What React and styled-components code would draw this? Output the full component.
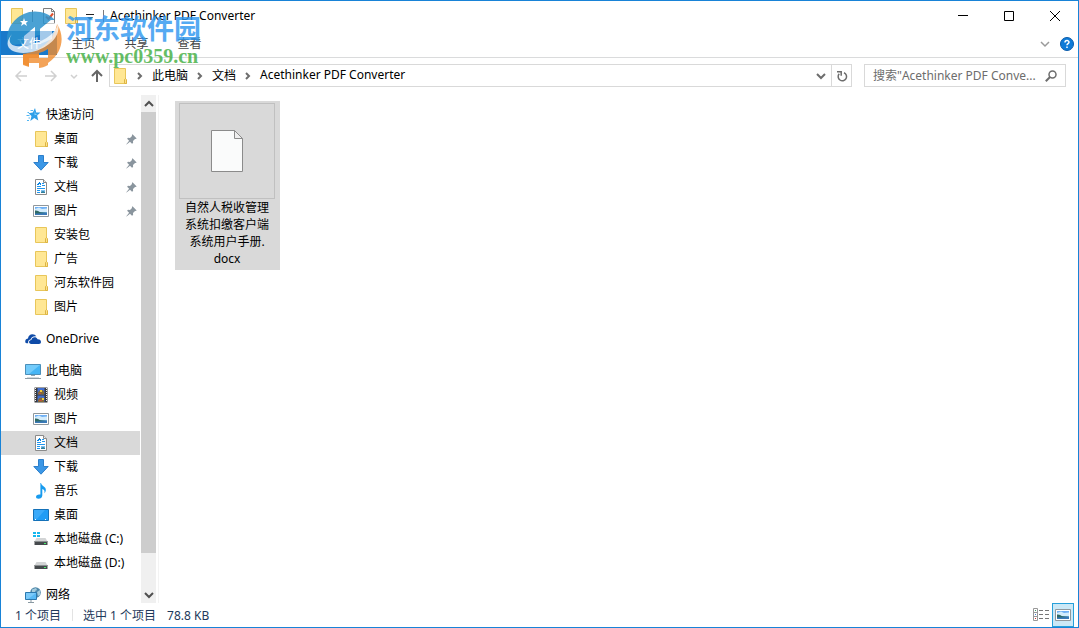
import { useState } from 'react'
import styled, { createGlobalStyle, css } from 'styled-components'

const GlobalStyle = createGlobalStyle`
  * {
    box-sizing: border-box;
  }

  body {
    margin: 0;
    background: #ffffff;
  }

  body, button, input {
    font-family: 'Noto Sans', 'Noto Sans CJK SC', sans-serif;
    font-size: 12px;
    color: #000000;
  }

  button {
    padding: 0;
    border: none;
    background: none;
  }

  svg {
    display: block;
    flex-shrink: 0;
  }
`

const Window = styled.div`
  position: relative;
  display: flex;
  flex-direction: column;
  height: 100vh;
  border: 1px solid #1883d7;
  background: #ffffff;
  overflow: hidden;
`

const TitleBar = styled.header`
  display: flex;
  align-items: center;
  height: 30px;
  padding-left: 8px;
`

const Separator = styled.span`
  width: 1px;
  height: 12px;
  background: ${props => props.$light ? '#e3e3e3' : '#7a7a7a'};
`

const QuickTools = styled.div`
  display: flex;
  align-items: center;
  gap: 4px;

  ${Separator} {
    margin: 0 3px;
  }
`

const ToolButton = styled.button`
  display: flex;
  align-items: center;
  justify-content: center;
  width: ${props => props.$narrow ? '12px' : '18px'};
  height: 20px;
`

const Title = styled.h1`
  flex: 1;
  margin: 0 0 0 3px;
  font-size: 12px;
  font-weight: 400;
  line-height: 16px;
`

const WindowButton = styled.button`
  display: flex;
  align-items: center;
  justify-content: center;
  width: 46px;
  height: 30px;

  &:hover {
    background: #e5e5e5;
  }
`

const Ribbon = styled.nav`
  display: flex;
  align-items: flex-start;
  height: 27px;
  border-bottom: 1px solid #dadbdc;
`

const Tab = styled.button`
  width: ${props => props.$file ? '56px' : '53px'};
  height: 24px;
  background: ${props => props.$file ? '#1979ca' : 'transparent'};
  color: ${props => props.$file ? '#ffffff' : '#444444'};
`

const RibbonEnd = styled.div`
  display: flex;
  align-items: center;
  gap: 7px;
  height: 26px;
  margin-left: auto;
  padding-right: 2px;
`

const AddressRow = styled.div`
  display: flex;
  align-items: center;
  padding: 6px 12px 8px;
`

const NavButtons = styled.div`
  display: flex;
  align-items: center;
  width: 96px;
  gap: 14px;
`

const NavButton = styled.button`
  display: flex;
  align-items: center;
  justify-content: center;
  width: ${props => props.$narrow ? '10px' : '16px'};
  height: 20px;
  margin: ${props => props.$narrow ? '0 -4px' : '0'};
`

const PathBox = styled.div`
  display: flex;
  align-items: center;
  flex: 1;
  height: 23px;
  border: 1px solid #d9d9d9;
`

const Crumbs = styled.div`
  display: flex;
  align-items: center;
  flex: 1;
  gap: 7px;
  padding-left: 2px;
`

const Crumb = styled.button`
  height: 20px;
  padding-bottom: 2px;
`

const PathButton = styled.button`
  display: flex;
  align-items: center;
  justify-content: center;
  width: 20px;
  height: 21px;
  border-left: ${props => props.$divided ? '1px solid #d9d9d9' : 'none'};
`

const SearchBox = styled.label`
  display: flex;
  align-items: center;
  width: 202px;
  height: 23px;
  margin-left: 12px;
  padding: 0 8px;
  border: 1px solid #d9d9d9;

  input {
    flex: 1;
    min-width: 0;
    height: 20px;
    padding: 0;
    border: none;
    outline: none;
    background: transparent;
    text-overflow: ellipsis;
  }

  input::placeholder {
    color: #6d6d6d;
    opacity: 1;
  }
`

const Body = styled.main`
  display: flex;
  flex: 1;
  min-height: 0;
`

const Sidebar = styled.aside`
  display: flex;
  width: 158px;
  padding-right: 2px;
  border-right: 1px solid #f3f3f3;
`

const Tree = styled.div`
  display: flex;
  flex: 1;
  flex-direction: column;
  gap: 8px;
  padding: 8px 0 0;
  overflow: hidden;
`

const Group = styled.div`
  flex-shrink: 0;
`

const TreeItem = styled.button`
  display: flex;
  align-items: center;
  gap: 5px;
  width: 100%;
  height: 24px;
  padding: 0 3px 0 ${props => props.$nested ? '32px' : '24px'};
  background: ${props => props.$selected ? '#d9d9d9' : 'transparent'};
  text-align: left;
  white-space: nowrap;

  span {
    flex: 1;
    padding-bottom: 2px;
  }
`

const ScrollTrack = styled.div`
  display: flex;
  flex-direction: column;
  width: 15px;
  margin-left: 1px;
  background: #f0f0f0;
`

const ScrollButton = styled.button`
  display: flex;
  align-items: center;
  justify-content: center;
  height: 17px;
`

const ScrollSpace = styled.div`
  flex: 1;
`

const ScrollThumb = styled.div`
  height: 93%;
  background: #cdcdcd;
`

const Files = styled.section`
  flex: 1;
  padding: 6px 16px;
`

const FileTile = styled.button`
  display: flex;
  flex-direction: column;
  align-items: center;
  width: 105px;
  padding: 2px 5px 3px 4px;
  background: ${props => props.$selected ? '#d9d9d9' : 'transparent'};
  line-height: 17px;
`

const Thumb = styled.span`
  display: flex;
  align-items: center;
  justify-content: center;
  width: 96px;
  height: 96px;
  border: 1px solid #c0c0c0;
`

const FileName = styled.span`
  width: 86px;
`

const StatusBar = styled.footer`
  display: flex;
  align-items: center;
  height: 24px;
  padding: 0 4px 0 14px;
  color: #1e395b;
`

const StatusText = styled.span`
  padding-right: 11px;
  white-space: nowrap;
`

const StatusDivider = styled(Separator)`
  margin-right: 10px;
`

const ViewButtons = styled.div`
  display: flex;
  align-items: center;
  margin-left: auto;
`

const ViewButton = styled.button`
  display: flex;
  align-items: center;
  justify-content: center;
  width: 22px;
  height: 24px;

  ${props => props.$active && css`
    border: 1px solid #26a0da;
    background: #cbe8f6;
  `}
`

const Watermark = styled.div`
  position: absolute;
  top: 8px;
  left: 4px;
  display: flex;
  align-items: center;
  gap: 3px;
  pointer-events: none;
`

const WatermarkText = styled.div`
  padding-top: 2px;
  opacity: 0.8;

  strong {
    display: block;
    color: #2b96f0;
    font-size: 27px;
    line-height: 32px;
  }

  em {
    display: block;
    color: #3fae3f;
    font-family: 'Liberation Serif', serif;
    font-size: 20px;
    font-style: normal;
    font-weight: 700;
    line-height: 22px;
  }
`

const Svg = ({ size = 16, w = size, h = size, children }) => (
  <svg width={w} height={h} viewBox={`0 0 ${w} ${h}`} fill="none" aria-hidden="true">
    {children}
  </svg>
)

const FolderIcon = () => (
  <Svg>
    <path d="M2.500.5h11v11.200l1 .8v3h-12z" fill="#ffe794" stroke="#e8c65a" />
    <path d="M12.500 15.500v-4l1-1 1 1.200v3.800z" fill="#ffe18a" stroke="#dcb544" />
  </Svg>
)

const StarIcon = () => (
  <Svg>
    <path d="M10 1l1.200 4.400 4.300.1-3.400 2.900 1.200 5-4-2.400-4 3 1.200-5L3.500 6.200l4.300-.6z" fill="#2f9fe8" />
    <path d="M5.500 3.500H8M2.500 5.500H4M1.500 8.500h3M3.500 11H5M2 13.500h2" stroke="#53b6f2" />
    <path d="M9.800 4l.7 3 2.500.2-3.500 1z" fill="#8dd6ff" />
  </Svg>
)

const DownloadIcon = () => (
  <Svg>
    <path d="M5.500.5h5v7h4.700L8 15.200.8 7.500h4.700z" fill="#3b97e6" stroke="#2c7fcb" />
  </Svg>
)

const DocIcon = () => (
  <Svg>
    <path d="M2.500.5h8l3 3v12h-11z" fill="#ffffff" stroke="#8a8a8a" />
    <path d="M10.500.5v3h3" fill="#e9e9e9" stroke="#8a8a8a" />
    <path d="M6 3h1v1h1v2H7V5H6v1H4V5h1V4h1z" fill="#0a84e0" />
    <path d="M9 4h2v1H9zM9 6h3v1H9zM4 7h4v1H4zM4 9h8v1H4zM4 11h3v1H4zM4 13h3v1H4z" fill="#2196ee" />
    <path d="M8 11h4v3H8z" fill="#7cc0f2" />
    <path d="M8 13l2-1 2 1v1H8z" fill="#2f7f9c" />
  </Svg>
)

const PictureIcon = () => (
  <Svg>
    <path d="M.5 2.500h15v11H.5z" fill="#ffffff" stroke="#8f979c" />
    <path d="M2 4h12v8H2z" fill="#6fb0f5" />
    <path d="M2 6l4-1.500 3 1.500 5-.5V9H2z" fill="#d3ecfc" />
    <path d="M2 7.500c3-.3 4 1.500 6 1.800s4 0 6 .4V11H2z" fill="#2f6a66" />
    <path d="M2 12v-1.500c4 .5 8-.8 12-.5v2z" fill="#3a79b8" />
  </Svg>
)

const CloudIcon = () => (
  <Svg>
    <path d="M.4 11.500C-.3 9 1.500 7.600 3 7.600 3.200 5 5 3.200 7.400 3.200c1.800 0 3.100.8 3.900 2.200-3.600-.4-5.200 1.400-5.700 3.100-1.800.2-2.800 1.500-2.400 3.800H1.800C1 12.300.6 12 .4 11.500z" fill="#0f4ba8" />
    <path d="M6.300 13c-3 0-3-3.700.1-3.900C6.700 5.700 11.400 5.300 12.600 8.300c2.400 0 3.400 1.300 3.400 2.700 0 1.200-.8 2-2 2z" fill="#0f4ba8" />
  </Svg>
)

const ComputerIcon = () => (
  <Svg>
    <path d="M.5 1.500h15v10H.5z" fill="#45b5f5" stroke="#4b8fb9" />
    <path d="M1 2h14L4 11H1z" fill="#73cbfa" />
    <path d="M6 12h4v1H6z" fill="#8da7b6" />
    <path d="M0 15.500h16" stroke="#8f9da6" />
    <path d="M2 14.500h12" stroke="#d3dade" />
  </Svg>
)

const VideoIcon = () => (
  <Svg>
    <path d="M1.500.5h13v15h-13z" fill="#38383a" />
    <path d="M4.500 1h7v6.500h-7zM4.500 8.500h7V15h-7z" fill="#416fd0" />
    <path d="M5 5.500c2-3 4-3 6-1v3H5zM5 13c2-3 4-3 6-1v3H5z" fill="#846b37" />
    <path d="M7 3h2v2H7zM9 11h2v2H9z" fill="#f4cc3d" />
    <path d="M6 6h2v1H6zM6 13h3v1H6z" fill="#c3503d" />
    <path d="M2.500 1v14M13.500 1v14" stroke="#f2f2f2" strokeDasharray="1 1" />
  </Svg>
)

const MusicIcon = () => (
  <Svg>
    <path d="M8 0c.4 3.300 5.500 3.500 4.800 7.500-.2 1.500-1 2.400-1.400 2.800.7-2.500-.5-4.100-2.100-4.400v6.500c0 2-1.700 3.300-3.800 3.300-3.500 0-3.200-4.300.6-4.300.8 0 1.200.2 1.300.2V0z" fill="#179bef" />
  </Svg>
)

const DesktopIcon = () => (
  <Svg>
    <path d="M.5 2.500h15v11H.5z" fill="#1f9cf5" stroke="#1471b8" />
    <path d="M1 3h11L4 12H1z" fill="#3aaafa" />
    <path d="M2 12.500h2M12 12.500h2" stroke="#ffffff" strokeDasharray="1 1" />
  </Svg>
)

const DriveIcon = ({ system }) => (
  <Svg>
    <path d="M3.500 7h9l2 3.500h-13z" fill="#d2d4d5" />
    <path d="M1.500 10h13v4h-13z" fill="#464a4d" />
    <path d="M1.500 10.500h13" stroke="#8b8f91" />
    <path d="M11 12h2v1h-2z" fill="#46f06b" />
    {system && <path d="M0 1h3v2H0zM4 1h3v2H4zM0 4h3v2H0zM4 4h3v2H4z" fill="#15b7ee" />}
  </Svg>
)

const NetworkIcon = () => (
  <Svg>
    <circle cx="10.500" cy="5.500" r="5.300" fill="#4f88aa" />
    <path d="M7 2.500l4-1.500 1 2-2 1 1 2-4-1zM12 5l3-2v5l-2 1z" fill="#a4cbdd" />
    <path d="M.5 5.500h11v7H.5z" fill="#58b9f5" stroke="#2b78ae" />
    <path d="M1 6h10L3 12H1z" fill="#7bcafa" />
    <path d="M6 13v2M3 15.500h6" stroke="#8999a2" />
  </Svg>
)

const PinIcon = () => (
  <Svg size={11}>
    <path d="M6.500.3l4.200 4.200-1.200.6-.5-.1-2 2 .1 1.900-1.100.9-2-2L.6 10.600l-.3-.3 2.800-3.500-2-2L2 3.800l2 .1 2-2-.1-.9z" fill="#8a959e" />
  </Svg>
)

const CheckDocIcon = () => (
  <Svg>
    <path d="M2.500.5h8l3 3v12h-11z" fill="#fafafa" stroke="#7d7d7d" />
    <path d="M10.500.5v3h3" stroke="#7d7d7d" />
    <path d="M5 8.500l2.500 2.500L12 5.500" stroke="#e2512c" strokeWidth="2" />
  </Svg>
)

const Chevron = ({ dir = 'down', color = '#6d6d6d', width = 2 }) => {
  const paths = {
    down: 'M1 3l4 4 4-4',
    up: 'M1 7l4-4 4 4',
    right: 'M3 2l3 3-3 3'
  }
  return (
    <Svg size={10}>
      <path d={paths[dir]} stroke={color} strokeWidth={width} />
    </Svg>
  )
}

const ArrowIcon = ({ dir, color }) => {
  const paths = {
    left: 'M14 8H3M8 3L3 8l5 5',
    right: 'M2 8h11M8 3l5 5-5 5',
    up: 'M8 14V3M3 8l5-5 5 5'
  }
  return (
    <Svg>
      <path d={paths[dir]} stroke={color} strokeWidth={dir === 'up' ? 2 : 1.5} />
    </Svg>
  )
}

const Logo = () => (
  <Svg w={58} h={60}>
    <path d="M2 32A28 28 0 0 1 50 11l-4 0-11 9v6l-5 1V18l-11 9v7c-6 2-13 3-17-2z" fill="#2b92cc" opacity="0.85" />
    <path d="M52 15c8 12 6 29-9 39V40c-3 2-6 3-9 4v5H24v8c-2 0-4-1-6-2V45l-4 0C32 45 49 33 52 15z" fill="#f08c2e" opacity="0.8" />
    <path d="M24 45h10v4h9v7c-3 2-7 3-9 3v-5H24v4l-6-2V45z" fill="#f08c2e" opacity="0.8" />
    <path d="M19 27l11-9v17l-11 2zM35 20l11-9 6 5-5 5v9l-12 5z" fill="#ffffff" opacity="0.6" />
    <path d="M7 25C-1 37 13 40 28 35c14-4 23-12 25-20 3 12-9 24-26 28C9 47-5 39 7 25z" fill="#ffffff" opacity="0.75" />
    <path d="M19 9l1 3h3l-2 2 1 3-3-2-3 2 1-3-2-2h3z" fill="#ffffff" />
  </Svg>
)

const groups = [
  {
    id: 'quick',
    label: '快速访问',
    icon: <StarIcon />,
    items: [
      { id: 'q-desktop', label: '桌面', icon: <FolderIcon />, pinned: true },
      { id: 'q-downloads', label: '下载', icon: <DownloadIcon />, pinned: true },
      { id: 'q-docs', label: '文档', icon: <DocIcon />, pinned: true },
      { id: 'q-pictures', label: '图片', icon: <PictureIcon />, pinned: true },
      { id: 'q-packages', label: '安装包', icon: <FolderIcon /> },
      { id: 'q-ads', label: '广告', icon: <FolderIcon /> },
      { id: 'q-hedong', label: '河东软件园', icon: <FolderIcon /> },
      { id: 'q-images', label: '图片', icon: <FolderIcon /> }
    ]
  },
  { id: 'onedrive', label: 'OneDrive', icon: <CloudIcon />, items: [] },
  {
    id: 'pc',
    label: '此电脑',
    icon: <ComputerIcon />,
    items: [
      { id: 'videos', label: '视频', icon: <VideoIcon /> },
      { id: 'pictures', label: '图片', icon: <PictureIcon /> },
      { id: 'docs', label: '文档', icon: <DocIcon /> },
      { id: 'downloads', label: '下载', icon: <DownloadIcon /> },
      { id: 'music', label: '音乐', icon: <MusicIcon /> },
      { id: 'desktop', label: '桌面', icon: <DesktopIcon /> },
      { id: 'disk-c', label: '本地磁盘 (C:)', icon: <DriveIcon system /> },
      { id: 'disk-d', label: '本地磁盘 (D:)', icon: <DriveIcon /> }
    ]
  },
  { id: 'network', label: '网络', icon: <NetworkIcon />, items: [] }
]

const App = () => {
  const [selected, setSelected] = useState('docs')
  const [query, setQuery] = useState('')

  return (
    <>
      <GlobalStyle />
      <Window>
        <TitleBar>
          <QuickTools>
            <FolderIcon />
            <Separator />
            <ToolButton aria-label="属性"><CheckDocIcon /></ToolButton>
            <ToolButton aria-label="新建文件夹"><FolderIcon /></ToolButton>
            <ToolButton $narrow aria-label="自定义快速访问工具栏">
              <Svg size={10}>
                <path d="M1 3.500h8" stroke="#222222" />
                <path d="M2 6h6L5 9z" fill="#222222" />
              </Svg>
            </ToolButton>
            <Separator />
          </QuickTools>
          <Title>Acethinker PDF Converter</Title>
          <WindowButton aria-label="最小化">
            <Svg size={10}><path d="M0 4.500h10" stroke="#000000" /></Svg>
          </WindowButton>
          <WindowButton aria-label="最大化">
            <Svg size={10}><path d="M.5.5h9v9h-9z" stroke="#000000" /></Svg>
          </WindowButton>
          <WindowButton aria-label="关闭">
            <Svg size={10}><path d="M0 0l10 10M10 0L0 10" stroke="#000000" /></Svg>
          </WindowButton>
        </TitleBar>

        <Ribbon>
          <Tab $file>文件</Tab>
          <Tab>主页</Tab>
          <Tab>共享</Tab>
          <Tab>查看</Tab>
          <RibbonEnd>
            <ToolButton $narrow aria-label="展开功能区"><Chevron color="#9a9a9a" width={1.5} /></ToolButton>
            <ToolButton aria-label="帮助">
              <Svg>
                <circle cx="8" cy="8" r="6.500" fill="#0f7bd8" stroke="#0b5cab" />
                <path d="M6 6.500C6 4 10 4 10 6.300 10 7.700 8 7.700 8 9.300M8 10.500v1.500" stroke="#ffffff" strokeWidth="1.500" />
              </Svg>
            </ToolButton>
          </RibbonEnd>
        </Ribbon>

        <AddressRow>
          <NavButtons>
            <NavButton aria-label="后退"><ArrowIcon dir="left" color="#d0d0d0" /></NavButton>
            <NavButton aria-label="前进"><ArrowIcon dir="right" color="#d0d0d0" /></NavButton>
            <NavButton $narrow aria-label="最近浏览的位置">
              <Svg size={10}><path d="M2 4l3 3 3-3" stroke="#d0d0d0" strokeWidth="1.500" /></Svg>
            </NavButton>
            <NavButton aria-label="上移"><ArrowIcon dir="up" color="#666666" /></NavButton>
          </NavButtons>
          <PathBox>
            <Crumbs>
              <FolderIcon />
              <Chevron dir="right" />
              <Crumb>此电脑</Crumb>
              <Chevron dir="right" />
              <Crumb>文档</Crumb>
              <Chevron dir="right" />
              <Crumb>Acethinker PDF Converter</Crumb>
            </Crumbs>
            <PathButton aria-label="以前的位置"><Chevron /></PathButton>
            <PathButton $divided aria-label="刷新">
              <Svg size={12}>
                <path d="M3.200 3.800A4.200 4.200 0 1 0 8 2.700" stroke="#6d6d6d" strokeWidth="1.500" />
                <path d="M1 1.700h4.200v4" stroke="#6d6d6d" strokeWidth="1.500" />
              </Svg>
            </PathButton>
          </PathBox>
          <SearchBox>
            <input
              type="text"
              aria-label="搜索"
              placeholder={'搜索"Acethinker PDF Conve...'}
              value={query}
              onChange={(e) => setQuery(e.target.value)}
            />
            <Svg size={12}>
              <circle cx="7.500" cy="4.500" r="3.500" stroke="#6d6d6d" strokeWidth="1.500" />
              <path d="M5 7L.8 11.200" stroke="#6d6d6d" strokeWidth="2" />
            </Svg>
          </SearchBox>
        </AddressRow>

        <Body>
          <Sidebar>
            <Tree>
              {groups.map(group => (
                <Group key={group.id}>
                  <TreeItem $selected={selected === group.id} onClick={() => setSelected(group.id)}>
                    {group.icon}
                    <span>{group.label}</span>
                  </TreeItem>
                  {group.items.map(item => (
                    <TreeItem
                      key={item.id}
                      $nested
                      $selected={selected === item.id}
                      onClick={() => setSelected(item.id)}
                    >
                      {item.icon}
                      <span>{item.label}</span>
                      {item.pinned && <PinIcon />}
                    </TreeItem>
                  ))}
                </Group>
              ))}
            </Tree>
            <ScrollTrack>
              <ScrollButton aria-label="向上滚动"><Chevron dir="up" color="#505050" /></ScrollButton>
              <ScrollSpace>
                <ScrollThumb />
              </ScrollSpace>
              <ScrollButton aria-label="向下滚动"><Chevron color="#505050" /></ScrollButton>
            </ScrollTrack>
          </Sidebar>

          <Files>
            <FileTile $selected>
              <Thumb>
                <Svg w={32} h={42}>
                  <path d="M.5.500h23l8 8v33H.5z" fill="#fafbfb" stroke="#8b8b8b" />
                  <path d="M23.500.5v8h8z" fill="#eeeeee" stroke="#8b8b8b" />
                </Svg>
              </Thumb>
              <FileName>自然人税收管理系统扣缴客户端系统用户手册.<wbr />docx</FileName>
            </FileTile>
          </Files>
        </Body>

        <StatusBar>
          <StatusText>1 个项目</StatusText>
          <StatusDivider $light />
          <StatusText>选中 1 个项目</StatusText>
          <StatusText>78.8 KB</StatusText>
          <ViewButtons>
            <ViewButton aria-label="详细信息">
              <Svg w={16} h={14}>
                <path d="M.5.5h4v12h-4zM.5 4.500h4M.5 8.500h4" stroke="#999999" />
                <path d="M6 2.500h4M12 2.500h4M6 6.500h4M12 6.500h4M6 10.500h4M12 10.500h4" stroke="#777777" />
                <path d="M2 2h1v1H2z" fill="#3c9b62" />
                <path d="M2 6h1v1H2z" fill="#4a7fd0" />
                <path d="M2 10h1v1H2z" fill="#cf3030" />
              </Svg>
            </ViewButton>
            <ViewButton $active aria-label="大缩略图"><PictureIcon /></ViewButton>
          </ViewButtons>
        </StatusBar>

        <Watermark>
          <Logo />
          <WatermarkText>
            <strong>河东软件园</strong>
            <em>www.pc0359.cn</em>
          </WatermarkText>
        </Watermark>
      </Window>
    </>
  )
}

export default App
